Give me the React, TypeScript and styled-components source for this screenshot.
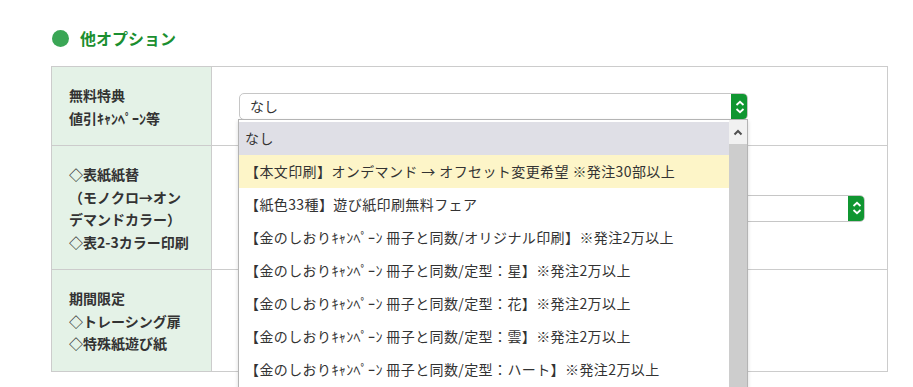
import React from 'react';
import styled, { createGlobalStyle } from 'styled-components';

const GlobalStyle = createGlobalStyle`
  html, body {
    margin: 0;
    padding: 0;
    background: #ffffff;
    overflow: hidden;
  }
  body {
    font-family: "Noto Sans CJK JP", "Noto Sans", sans-serif;
    color: #333333;
  }
`;

const Page = styled.div`
  width: 913px;
  height: 387px;
  padding: 28px 0 0 51px;
  box-sizing: border-box;
`;

const SectionTitle = styled.h2`
  display: flex;
  align-items: center;
  gap: 11px;
  margin: 0 0 18px 1px;
  font-size: 16px;
  line-height: 20px;
  font-weight: 700;
  color: #1b8f30;
`;

const Dot = styled.span`
  width: 17px;
  height: 17px;
  border-radius: 50%;
  background: #3aa655;
`;

const Table = styled.table`
  width: 837px;
  border-collapse: collapse;
  font-size: 14px;
`;

const HeadCell = styled.th`
  width: 125px;
  padding: 17px 17px 16px 17px;
  background: #e4f2e7;
  border: 1px solid #cccccc;
  text-align: left;
  vertical-align: middle;
  font-weight: 700;
  line-height: 22.5px;
  color: #333333;
`;

const BodyCell = styled.td`
  padding: 17px 22px 16px 27px;
  border: 1px solid #cccccc;
  vertical-align: middle;
`;

const SelectWrap = styled.div<{ $width: number }>`
  position: relative;
  width: ${(p) => p.$width}px;
`;

const SelectBox = styled.div`
  display: flex;
  align-items: center;
  height: 27px;
  box-sizing: border-box;
  border: 1px solid #c6c6c6;
  border-radius: 5px;
  background: #ffffff;
  overflow: hidden;
`;

const SelectValue = styled.span`
  flex: 1;
  padding-left: 10px;
  font-size: 14px;
  line-height: 17px;
  color: #333333;
`;

const SelectButton = styled.span`
  width: 17px;
  height: 27px;
  margin: -1px -1px -1px 0;
  background: #109631;
  border-radius: 0 5px 5px 0;
  display: flex;
  align-items: center;
  justify-content: center;
`;

const Dropdown = styled.div`
  position: absolute;
  top: 26px;
  left: -1px;
  width: 510px;
  height: 275px;
  box-sizing: border-box;
  border: 1px solid #b4b4b4;
  border-bottom: none;
  background: #ffffff;
  box-shadow: 0 2px 4px rgba(0, 0, 0, 0.15);
  display: flex;
  z-index: 10;
`;

const OptionList = styled.ul`
  flex: 1;
  list-style: none;
  margin: 0;
  padding: 2px 0 0 0;
`;

const Option = styled.li<{ $tone?: 'current' | 'hover' }>`
  padding: 8px 6px;
  font-size: 14px;
  line-height: 17px;
  letter-spacing: 0.4px;
  white-space: nowrap;
  color: #333333;
  background: ${(p) =>
    p.$tone === 'current' ? '#dfdfe6' : p.$tone === 'hover' ? '#fdf5c8' : '#ffffff'};
`;

const ScrollBar = styled.div`
  width: 18px;
  display: flex;
  flex-direction: column;
  background: #f1f1f1;
`;

const ScrollArrow = styled.div`
  height: 24px;
  display: flex;
  align-items: center;
  justify-content: center;
`;

const ScrollThumb = styled.div`
  flex: 1;
  background: #cdcdcd;
`;

const Chevrons = () => (
  <svg width="10" height="14" viewBox="0 0 10 14" fill="none">
    <path d="M1.5 5 L5 1.8 L8.5 5" stroke="#fff" strokeWidth="1.8" />
    <path d="M1.5 9 L5 12.2 L8.5 9" stroke="#fff" strokeWidth="1.8" />
  </svg>
);

const UpArrow = () => (
  <svg width="10" height="7" viewBox="0 0 10 7" fill="none">
    <path d="M1.5 5.5 L5 2 L8.5 5.5" stroke="#505050" strokeWidth="2" />
  </svg>
);

const options = [
  'なし',
  '【本文印刷】オンデマンド → オフセット変更希望 ※発注30部以上',
  '【紙色33種】遊び紙印刷無料フェア',
  '【金のしおりｷｬﾝﾍﾟｰﾝ 冊子と同数/オリジナル印刷】※発注2万以上',
  '【金のしおりｷｬﾝﾍﾟｰﾝ 冊子と同数/定型：星】※発注2万以上',
  '【金のしおりｷｬﾝﾍﾟｰﾝ 冊子と同数/定型：花】※発注2万以上',
  '【金のしおりｷｬﾝﾍﾟｰﾝ 冊子と同数/定型：雲】※発注2万以上',
  '【金のしおりｷｬﾝﾍﾟｰﾝ 冊子と同数/定型：ハート】※発注2万以上',
];

const Select: React.FC<{ width: number; value?: string; open?: boolean }> = ({
  width,
  value,
  open,
}) => (
  <SelectWrap $width={width}>
    <SelectBox>
      <SelectValue>{value}</SelectValue>
      <SelectButton>
        <Chevrons />
      </SelectButton>
    </SelectBox>
    {open && (
      <Dropdown>
        <OptionList>
          {options.map((o, i) => (
            <Option key={i} $tone={i === 0 ? 'current' : i === 1 ? 'hover' : undefined}>
              {o}
            </Option>
          ))}
        </OptionList>
        <ScrollBar>
          <ScrollArrow>
            <UpArrow />
          </ScrollArrow>
          <ScrollThumb />
        </ScrollBar>
      </Dropdown>
    )}
  </SelectWrap>
);

export default function App() {
  return (
    <>
      <GlobalStyle />
      <Page>
        <SectionTitle>
          <Dot />
          他オプション
        </SectionTitle>
        <Table>
          <tbody>
            <tr>
              <HeadCell>
                無料特典
                <br />
                値引ｷｬﾝﾍﾟｰﾝ等
              </HeadCell>
              <BodyCell>
                <Select width={509} value="なし" open />
              </BodyCell>
            </tr>
            <tr>
              <HeadCell>
                ◇表紙紙替
                <br />
                （モノクロ→オン
                <br />
                デマンドカラー）
                <br />
                ◇表2-3カラー印刷
              </HeadCell>
              <BodyCell>
                <Select width={626} value="なし" />
              </BodyCell>
            </tr>
            <tr>
              <HeadCell>
                期間限定
                <br />
                ◇トレーシング扉
                <br />
                ◇特殊紙遊び紙
              </HeadCell>
              <BodyCell />
            </tr>
          </tbody>
        </Table>
      </Page>
    </>
  );
}
